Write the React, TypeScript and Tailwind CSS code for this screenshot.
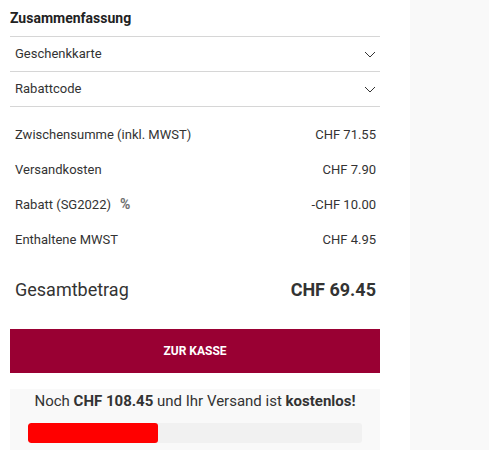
const totals = [
  { label: 'Zwischensumme (inkl. MWST)', value: 'CHF 71.55' },
  { label: 'Versandkosten', value: 'CHF 7.90' },
  { label: 'Rabatt (SG2022)', value: '-CHF 10.00', discount: true },
  { label: 'Enthaltene MWST', value: 'CHF 4.95' },
];

function Chevron() {
  return (
    <svg width="12" height="7" viewBox="0 0 12 7" fill="none" className="text-[#333]">
      <polyline points="1,1 6,6 11,1" stroke="currentColor" strokeWidth="1" />
    </svg>
  );
}

export default function App() {
  return (
    <div className="flex h-[450px] w-[489px] overflow-hidden bg-white text-[#333] font-['Roboto',sans-serif]">
      <div className="w-[380px] shrink-0 pl-[10px]">
        {/* Header */}
        <div className="flex h-[37px] items-center border-b border-[#d6d6d6] pt-[1px]">
          <h2 className="text-[14px] font-bold text-[#222]">Zusammenfassung</h2>
        </div>

        {/* Accordions */}
        {['Geschenkkarte', 'Rabattcode'].map((label) => (
          <div
            key={label}
            className="flex h-[35px] items-center justify-between border-b border-[#d6d6d6] pl-[5px] pr-[4px]"
          >
            <span className="text-[13px]">{label}</span>
            <Chevron />
          </div>
        ))}

        {/* Totals */}
        <div className="pt-[10px]">
          {totals.map(({ label, value, discount }) => (
            <div key={label} className="flex h-[35px] items-center justify-between pl-[5px] pr-[4px] text-[13px]">
              <span className="flex items-center">
                {label}
                {discount && <span className="ml-[9px] text-[14px] font-bold text-[#6f6f6f]">%</span>}
              </span>
              <span>{value}</span>
            </div>
          ))}
        </div>

        <div className="mt-[13px] flex h-[38px] items-center justify-between pl-[5px] pr-[4px] text-[18px]">
          <span>Gesamtbetrag</span>
          <span className="font-bold">CHF 69.45</span>
        </div>

        <button className="mt-[21px] flex h-[44px] w-full items-center justify-center bg-[#990033] text-[12px] font-bold text-white">
          ZUR KASSE
        </button>

        {/* Free shipping */}
        <div className="mt-[16px] bg-[#f9f9f9] px-[18px] pt-[2px] pb-[10px]">
          <p className="text-center text-[15px] leading-[20px]">
            Noch <b>CHF 108.45</b> und Ihr Versand ist <b>kostenlos!</b>
          </p>
          <div className="mt-[12px] h-[20px] w-full overflow-hidden rounded-[3px] bg-[#f1f1f1]">
            <div className="h-full bg-[#ff0000] rounded-[3px]" style={{ width: '39%' }} />
          </div>
        </div>
      </div>
      <div className="ml-[30px] flex-1 bg-[#f9f9f9]" />
    </div>
  );
}
